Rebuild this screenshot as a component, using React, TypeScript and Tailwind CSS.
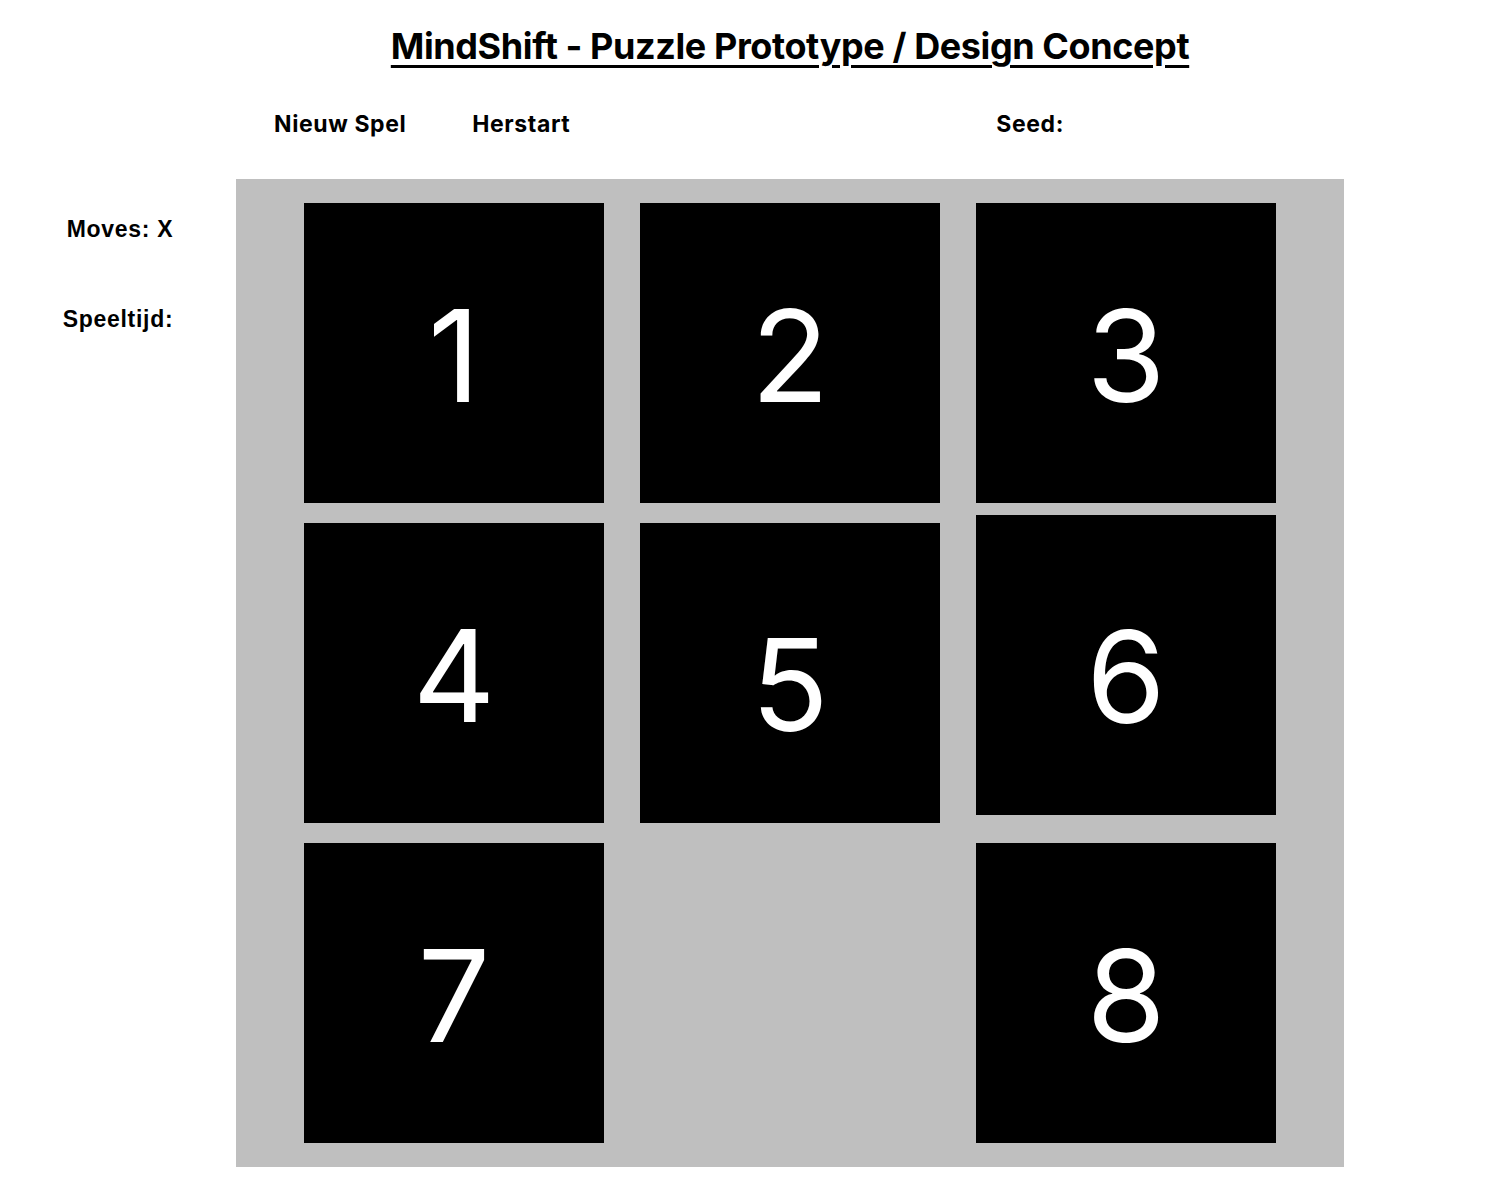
import React from 'react';

const tiles: { n: number | null; shift?: string; numPad: string }[] = [
  { n: 1, numPad: 'pt-[6px]' },
  { n: 2, numPad: 'pt-[6px]' },
  { n: 3, numPad: 'pt-[6px]' },
  { n: 4, numPad: 'pt-[6px]' },
  { n: 5, numPad: 'pt-[24px]' },
  { n: 6, shift: '-mt-[8px] mb-[8px]', numPad: 'pt-[24px]' },
  { n: 7, numPad: 'pt-[6px]' },
  { n: null, numPad: '' },
  { n: 8, numPad: 'pt-[6px]' },
];

export default function App() {
  return (
    <div className="flex w-[1490px] h-[1190px] bg-white text-black font-['Inter',sans-serif]">
      {/* Sidebar stats */}
      <aside className="w-[236px] pt-[212px] flex flex-col items-center gap-[55px] font-['Liberation_Sans',Arial,sans-serif] font-bold text-[23px] tracking-[0.7px]">
        <div className="pl-[4px]">Moves: X</div>
        <div>Speeltijd:</div>
      </aside>

      <main className="w-[1108px] flex flex-col">
        {/* Title */}
        <h1 className="pt-[24px] text-center text-[36px] font-bold leading-[44px] tracking-[-0.4px] underline decoration-[3px] underline-offset-[6px]">
          MindShift - Puzzle Prototype / Design Concept
        </h1>

        {/* Controls */}
        <div className="mt-[38px] h-[36px] flex items-center text-[23px] font-bold tracking-[0.6px]">
          <button className="ml-[38px]">Nieuw Spel</button>
          <button className="ml-[66px]">Herstart</button>
          <span className="ml-[426px]">Seed:</span>
        </div>

        {/* Board */}
        <div className="mt-[37px] bg-[#bfbfbf] pt-[24px] pb-[24px] pl-[68px] pr-[68px] grid grid-cols-[300px_300px_300px] gap-x-[36px] gap-y-[20px]">
          {tiles.map((t, i) =>
            t.n === null ? (
              <div key={i} className="w-[300px] h-[300px]" />
            ) : (
              <div
                key={i}
                className={`w-[300px] h-[300px] bg-black text-white flex items-center justify-center ${t.shift ?? ''}`}
              >
                <span className={`text-[128px] font-normal leading-none ${t.numPad}`}>{t.n}</span>
              </div>
            )
          )}
        </div>
      </main>
    </div>
  );
}
